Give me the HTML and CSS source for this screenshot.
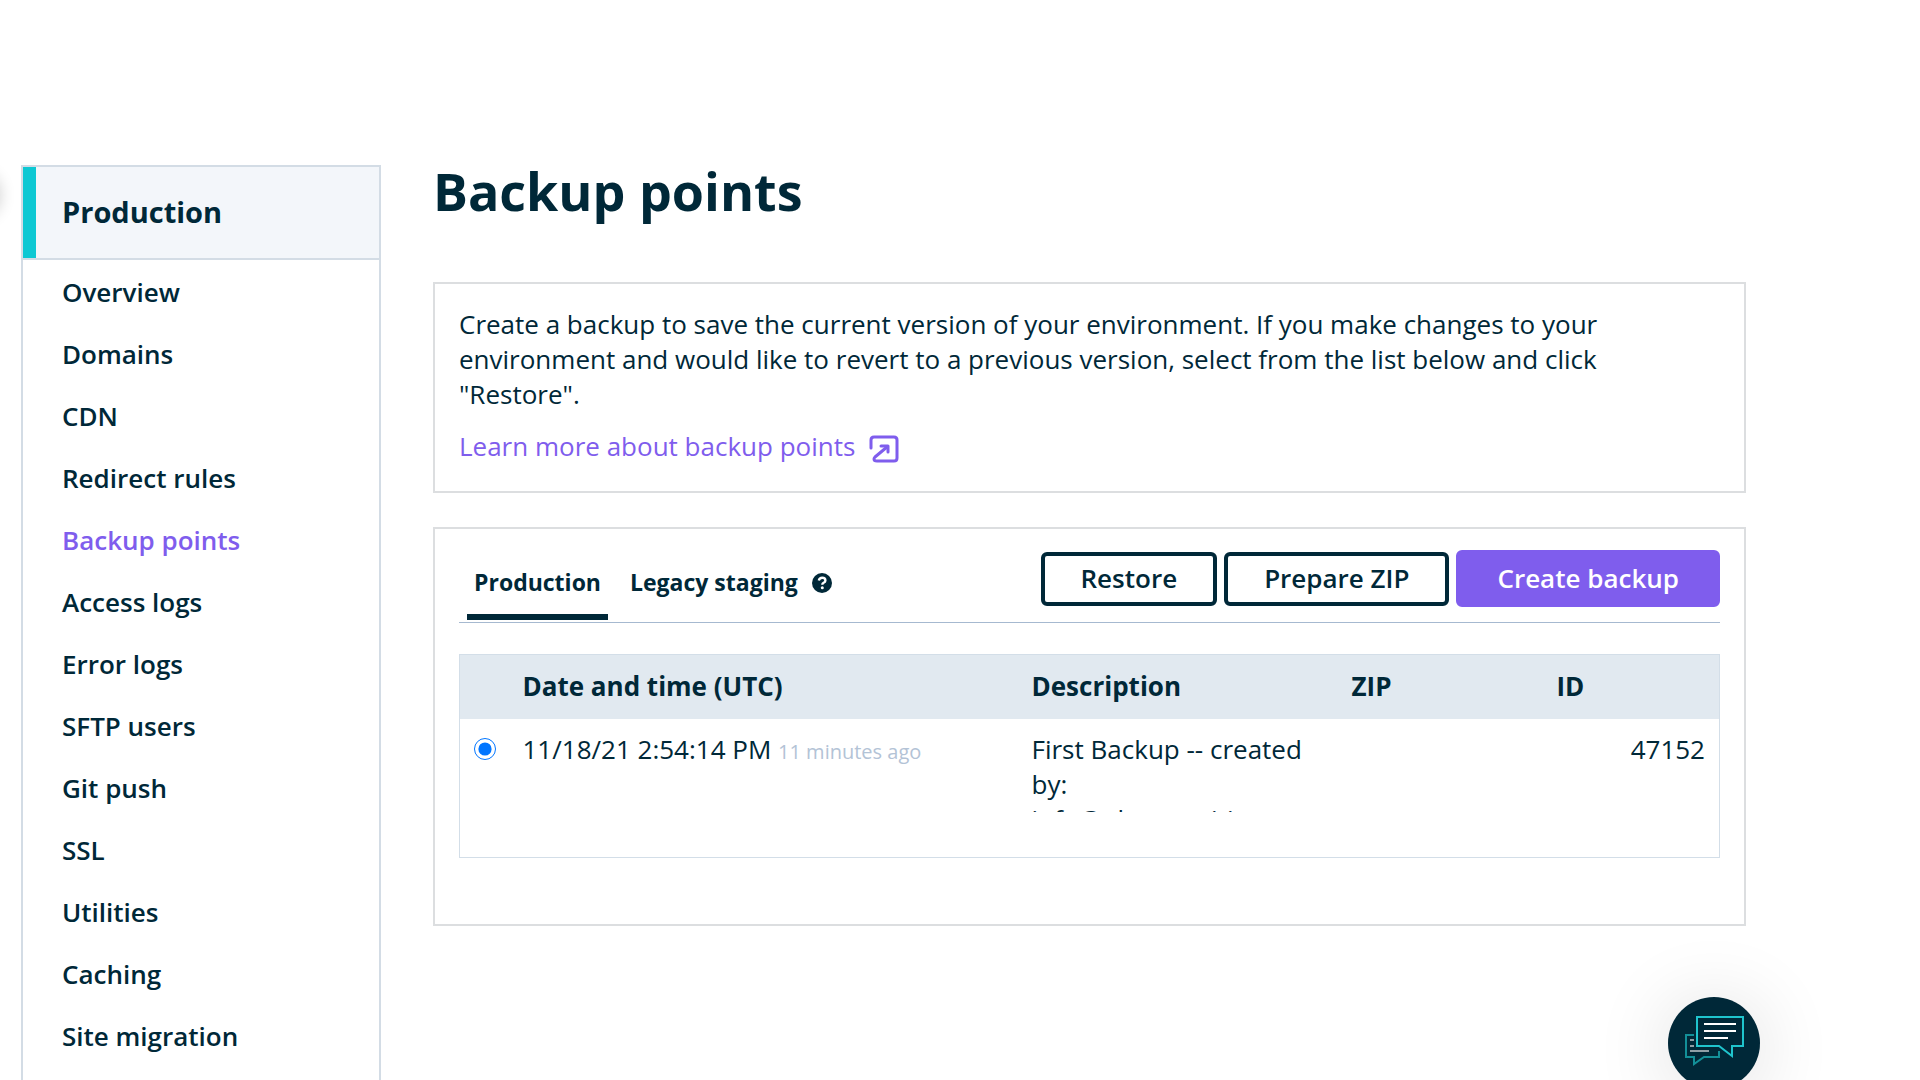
FILE: index.html
```html
<!DOCTYPE html>
<html lang="en">
<head>
    <meta charset="UTF-8">
    <meta name="viewport" content="width=device-width, initial-scale=1.0">
    <title>Backup points</title>
    <link rel="stylesheet" href="styles.css">
</head>
<body>
    <div class="drawer-handle"></div>
    <div class="page">
        <!-- Environment navigation -->
        <nav class="sidebar">
            <h2 class="sidebar-title">Production</h2>
            <ul class="sidebar-menu">
                <li><a href="#">Overview</a></li>
                <li><a href="#">Domains</a></li>
                <li><a href="#">CDN</a></li>
                <li><a href="#">Redirect rules</a></li>
                <li><a href="#" class="active">Backup points</a></li>
                <li><a href="#">Access logs</a></li>
                <li><a href="#">Error logs</a></li>
                <li><a href="#">SFTP users</a></li>
                <li><a href="#">Git push</a></li>
                <li><a href="#">SSL</a></li>
                <li><a href="#">Utilities</a></li>
                <li><a href="#">Caching</a></li>
                <li><a href="#">Site migration</a></li>
            </ul>
        </nav>

        <main class="content">
            <h1>Backup points</h1>

            <section class="panel intro">
                <p>Create a backup to save the current version of your environment. If you make changes to your environment and would like to revert to a previous version, select from the list below and click "Restore".</p>
                <a href="#" class="learn-more">Learn more about backup points
                    <svg class="icon-external" viewBox="0 0 30 28" fill="none" stroke="currentColor" stroke-width="3" stroke-linecap="round" stroke-linejoin="round">
                        <path d="M2 13V5Q2 2 5 2H25Q28 2 28 5V23Q28 26 25 26H8Q5 26 5 24Q5 23 6 22L18 12"/>
                        <path d="M12 11H19V17"/>
                    </svg>
                </a>
            </section>

            <section class="panel backups">
                <div class="toolbar">
                    <div class="tabs">
                        <button type="button" class="tab selected">Production</button>
                        <button type="button" class="tab">Legacy staging
                            <svg class="icon-help" viewBox="0 0 20 20">
                                <circle cx="10" cy="10" r="10" fill="currentColor"/>
                                <path d="M6.800 7.500Q7.500 4.800 10.200 4.800Q13.400 4.800 13.400 7.400Q13.400 8.800 11.600 9.800Q10.300 10.500 10.300 11.800" fill="none" stroke="#fff" stroke-width="2.400"/>
                                <circle cx="10.300" cy="14.800" r="1.500" fill="#fff"/>
                            </svg>
                        </button>
                    </div>
                    <div class="actions">
                        <button type="button" class="btn">Restore</button>
                        <button type="button" class="btn">Prepare ZIP</button>
                        <button type="button" class="btn primary">Create backup</button>
                    </div>
                </div>

                <table class="backup-table">
                    <thead>
                        <tr>
                            <th class="col-select"></th>
                            <th class="col-date">Date and time (UTC)</th>
                            <th class="col-description">Description</th>
                            <th class="col-zip">ZIP</th>
                            <th class="col-id">ID</th>
                        </tr>
                    </thead>
                    <tbody>
                        <tr>
                            <td><input type="radio" id="backup-47152" name="backup" checked></td>
                            <td><label for="backup-47152">11/18/21 2:54:14 PM <small>11 minutes ago</small></label></td>
                            <td><div class="description">First Backup -- created by: info@pluseposition.com</div></td>
                            <td></td>
                            <td class="backup-id">47152</td>
                        </tr>
                    </tbody>
                </table>
            </section>
        </main>
    </div>

    <!-- Support chat -->
    <button type="button" class="chat" aria-label="Open chat">
        <svg viewBox="0 0 92 92" fill="none">
            <path d="M26 38H18V60H26V67L36 60H51V54" stroke="#138f98" stroke-width="2"/>
            <path d="M22 43H26M22 49H26M22 54H41" stroke="#8f9ea6" stroke-width="2"/>
            <path d="M29 20H75V49H64V59L51 49H29Z" stroke="#1fc4cd" stroke-width="2"/>
            <path d="M36 27H68M36 34H68M36 41H60" stroke="#fff" stroke-width="2"/>
        </svg>
    </button>
</body>
</html>
```
FILE: styles.css
```css
* {
    box-sizing: border-box;
}
body {
    margin: 0;
    height: 100vh;
    overflow: hidden;
    background-color: #fff;
    color: #002838;
    font-family: "Open Sans", sans-serif;
    font-size: 26px;
    line-height: 35px;
}
a {
    color: inherit;
    text-decoration: none;
}
button {
    font-family: inherit;
    color: inherit;
    cursor: pointer;
}
.page {
    display: flex;
    align-items: stretch;
    gap: 52px;
    min-height: 100vh;
    padding: 165px 174px 0 21px;
}

/* Sidebar */
.sidebar {
    flex: 0 0 360px;
    border: 2px solid #d3dce5;
    border-bottom: none;
}
.sidebar-title {
    margin: 0;
    padding: 27px 39px 29px;
    background-color: #f3f6fa;
    border-bottom: 2px solid #d3dce5;
    box-shadow: inset 13px 0 #0dc8d3;
    font-size: 29px;
    font-weight: 700;
}
.sidebar-menu {
    margin: 0;
    padding: 2px 0 0;
    list-style: none;
}
.sidebar-menu a {
    display: block;
    padding: 13px 39px 14px;
    font-weight: 600;
}
.sidebar-menu a.active {
    color: #7f5ded;
}

/* Main column */
.content {
    flex: 1;
    min-width: 0;
}
h1 {
    margin: 0 0 65px;
    font-size: 52px;
    line-height: 52px;
    font-weight: 700;
}
.panel {
    margin-bottom: 34px;
    padding: 23px 24px 27px;
    border: 2px solid #dcdee0;
}
.intro p {
    margin: 0 0 17px;
    max-width: 1180px;
}
.learn-more {
    display: flex;
    align-items: center;
    gap: 14px;
    color: #7f5ded;
}
.icon-external {
    width: 30px;
    height: 28px;
    margin-top: 4px;
}

/* Tabs and actions */
.backups {
    padding-top: 21px;
}
.toolbar {
    display: flex;
    justify-content: space-between;
    align-items: flex-end;
    border-bottom: 1px solid #a6b9d0;
}
.tabs {
    display: flex;
    gap: 15px;
    padding: 0 0 2px 8px;
}
.tab {
    display: flex;
    align-items: center;
    gap: 14px;
    padding: 0 7px 14px;
    border: none;
    border-bottom: 6px solid transparent;
    background: none;
    font-size: 23px;
    line-height: 35px;
    font-weight: 700;
}
.tab.selected {
    border-bottom-color: #002838;
}
.icon-help {
    width: 20px;
    height: 20px;
}
.actions {
    display: flex;
    align-items: center;
    gap: 7px;
    padding-bottom: 15px;
}
.btn {
    padding: 5px 36px 6px;
    border: 4px solid #002838;
    border-radius: 6px;
    background-color: #fff;
    font-size: 26px;
    line-height: 35px;
    font-weight: 600;
}
.btn.primary {
    padding: 7px 37px;
    border-color: #7f5ded;
    background-color: #7f5ded;
    color: #fff;
}

/* Backup list */
.backup-table {
    width: 100%;
    margin: 31px 0 39px;
    border: 1px solid #d3dee8;
    border-collapse: collapse;
    table-layout: fixed;
}
.backup-table th,
.backup-table td {
    padding: 13px 14px;
    text-align: left;
    vertical-align: top;
}
.backup-table th {
    padding: 14px 14px 15px;
    background-color: #e1e9f0;
    font-weight: 700;
}
.backup-table td {
    padding-bottom: 45px;
}
.col-select {
    width: 49px;
}
.col-date {
    width: 509px;
}
.col-description {
    width: 320px;
}
.col-zip {
    width: 205px;
}
.backup-table input {
    display: block;
    width: 22px;
    height: 22px;
    margin: 6px 0;
    accent-color: #0075ff;
}
.backup-table small {
    color: #b3c3d6;
    font-size: 20px;
}
.description {
    max-height: 80px;
    overflow: hidden;
}
.backup-table .backup-id {
    text-align: right;
}

/* Floating elements */
.chat {
    position: fixed;
    right: 160px;
    bottom: -9px;
    width: 92px;
    height: 92px;
    padding: 0;
    border: none;
    border-radius: 50%;
    background-color: #002838;
    box-shadow: 0 6px 80px rgba(0, 0, 0, 0.14);
}
.chat svg {
    display: block;
}
.drawer-handle {
    position: fixed;
    top: 171px;
    left: -48px;
    width: 48px;
    height: 48px;
    border-radius: 50%;
    box-shadow: 0 0 16px rgba(0, 0, 0, 0.2);
}
```
